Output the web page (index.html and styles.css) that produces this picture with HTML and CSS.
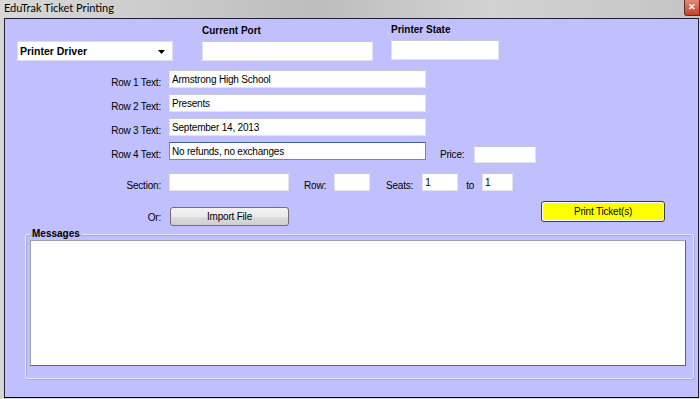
FILE: index.html
```html
<!DOCTYPE html>
<html lang="en">
  <head>
    <meta charset="UTF-8" />
    <title>EduTrak Ticket Printing</title>
    <link rel="stylesheet" href="styles.css">
  </head>
  <body>
    <div class="window">
      <div class="titlebar">
        <span class="title">EduTrak Ticket Printing</span>
        <span class="close">&#x2715;</span>
      </div>
      <div class="client">
        <div class="top-row">
          <div class="combo">
            <span>Printer Driver</span>
            <svg width="7" height="4" viewBox="0 0 7 4"><path d="M0 0h7L3.5 4z" fill="#000"/></svg>
          </div>
          <div class="port">
            <div class="head">Current Port</div>
            <input class="box port-box" type="text" />
          </div>
          <div class="state">
            <div class="head">Printer State</div>
            <input class="box state-box" type="text" />
          </div>
        </div>

        <div class="fields">
          <div class="row">
            <label class="lbl">Row 1 Text:</label>
            <input class="box wide" type="text" value="Armstrong High School" />
          </div>
          <div class="row">
            <label class="lbl">Row 2 Text:</label>
            <input class="box wide" type="text" value="Presents" />
          </div>
          <div class="row">
            <label class="lbl">Row 3 Text:</label>
            <input class="box wide" type="text" value="September 14, 2013" />
          </div>
          <div class="row">
            <label class="lbl">Row 4 Text:</label>
            <input class="box wide focused" type="text" value="No refunds, no exchanges" />
            <label class="inline price-lbl">Price:</label>
            <input class="box price" type="text" />
          </div>
          <div class="row seat-row">
            <label class="lbl">Section:</label>
            <input class="box section" type="text" />
            <label class="inline row-lbl">Row:</label>
            <input class="box small" type="text" />
            <label class="inline seats-lbl">Seats:</label>
            <input class="box small" type="text" value="1" />
            <label class="inline to-lbl">to</label>
            <input class="box tiny" type="text" value="1" />
          </div>
          <div class="row button-row">
            <label class="lbl or-lbl">Or:</label>
            <button class="import">Import File</button>
            <button class="print">Print Ticket(s)</button>
          </div>
        </div>

        <fieldset class="messages">
          <legend>Messages</legend>
          <textarea></textarea>
        </fieldset>
      </div>
    </div>
  </body>
</html>
```

FILE: styles.css
```css
body {
  margin: 0;
  font-family: "Liberation Sans", Arial, sans-serif;
  font-size: 10px;
  background: #fff;
}

.window {
  width: 700px;
  height: 399px;
  background: #d6d6d6;
  box-sizing: border-box;
  padding: 0 1px 1px 4px;
  display: flex;
  flex-direction: column;
}

.titlebar {
  height: 18px;
  margin-left: -4px;
  margin-right: -1px;
  display: flex;
  align-items: flex-start;
  justify-content: space-between;
  background: linear-gradient(to right, #d8d8d8 0%, #cdcdcd 20%, #bdbdbd 45%, #d2d2d2 70%, #c4c4c4 100%);
}

.title {
  font-family: Lato, "Noto Sans", sans-serif;
  font-size: 11px;
  line-height: 16px;
  padding-left: 4px;
  color: #000;
}

.close {
  width: 14px;
  height: 15px;
  background: linear-gradient(#e08a78, #c8402c);
  border: 1px solid #6b2a20;
  border-top: none;
  border-radius: 0 0 0 3px;
  color: #fff;
  font-size: 9px;
  font-weight: bold;
  line-height: 14px;
  text-align: center;
}

.client {
  flex: 1;
  background: #c0c0ff;
  border: 1px solid #202030;
  border-bottom-color: #000;
  box-sizing: border-box;
  padding: 6px 0 0 12px;
  display: flex;
  flex-direction: column;
}

.top-row {
  display: flex;
  align-items: flex-end;
}

.head {
  font-weight: bold;
  font-size: 10px;
  line-height: 12px;
  margin-bottom: 4px;
  color: #000;
}

.combo {
  width: 156px;
  height: 20px;
  box-sizing: border-box;
  background: #fff;
  border: 1px solid #dcdcea;
  display: flex;
  align-items: center;
  justify-content: space-between;
  padding: 0 7px 0 2px;
  font-weight: bold;
  font-size: 10.5px;
}

.combo svg {
  margin-top: 1px;
}

.port {
  margin-left: 29px;
}

.state {
  margin-left: 18px;
  position: relative;
  top: -1px;
}

.box {
  display: block;
  box-sizing: border-box;
  height: 18px;
  margin: 0;
  padding: 0 2px;
  background: #fff;
  border: 1px solid #e2e3ea;
  border-top-color: #c4c6d0;
  font-family: "Liberation Sans", Arial, sans-serif;
  font-size: 10px;
  letter-spacing: -0.2px;
  color: #000;
  outline: none;
}

.port-box {
  width: 171px;
  height: 20px;
}

.state-box {
  width: 108px;
  height: 20px;
}

.fields {
  margin-top: 9px;
  display: flex;
  flex-direction: column;
  gap: 6px;
}

.row {
  display: flex;
  align-items: flex-start;
}

.lbl,
.inline {
  height: 18px;
  box-sizing: border-box;
  line-height: 18px;
  padding-top: 4px;
  letter-spacing: -0.2px;
  color: #000;
}

.lbl {
  width: 144px;
  margin-right: 8px;
  text-align: right;
}

.wide {
  width: 257px;
}

.focused {
  border-color: #5f8cc8;
  border-top-color: #3d5f8f;
}

.price-lbl {
  margin-left: 14px;
  margin-right: 10px;
}

.price {
  width: 62px;
  height: 17px;
  margin-top: 4px;
}

.seat-row {
  margin-top: 4px;
}

.section {
  width: 120px;
}

.row-lbl {
  margin-left: 15px;
  margin-right: 8px;
}

.small {
  width: 36px;
}

.seats-lbl {
  margin-left: 16px;
  margin-right: 9px;
}

.to-lbl {
  margin-left: 8px;
  margin-right: 8px;
}

.tiny {
  width: 31px;
}

.button-row {
  margin-top: 10px;
}

.or-lbl {
  padding-top: 2px;
  margin-right: 9px;
}

.import {
  width: 119px;
  height: 19px;
  margin: 0;
  padding: 0;
  border: 1px solid #707070;
  border-radius: 3px;
  background: linear-gradient(#f2f2f2 0%, #ebebeb 50%, #dddddd 51%, #cfcfcf 100%);
  font-family: "Liberation Sans", Arial, sans-serif;
  font-size: 10px;
  letter-spacing: -0.2px;
  color: #000;
}

.print {
  width: 124px;
  height: 21px;
  margin: -6px 0 0 252px;
  padding: 0;
  border: 1px solid #3c3c3c;
  border-radius: 3px;
  box-shadow: inset 0 0 0 1px #fff;
  background: #ffff00;
  font-family: "Liberation Sans", Arial, sans-serif;
  font-size: 10px;
  letter-spacing: -0.2px;
  color: #000;
}

.messages {
  margin: 2px 4px 0 8px;
  padding: 0 6px 12px 4px;
  border: 1px solid #e8e8ff;
  border-radius: 3px;
  box-shadow: inset 1px 1px 0 #a8a8d8, 1px 1px 0 #a8a8d8;
}

.messages legend {
  font-weight: bold;
  font-size: 10px;
  line-height: 12px;
  padding: 0 2px;
  color: #000;
}

.messages textarea {
  display: block;
  width: 656px;
  height: 126px;
  box-sizing: border-box;
  margin: 0;
  resize: none;
  background: #fff;
  border: 1px solid #646470;
  border-top-color: #a0a0a8;
  border-left-color: #a0a0a8;
  outline: none;
}
```
